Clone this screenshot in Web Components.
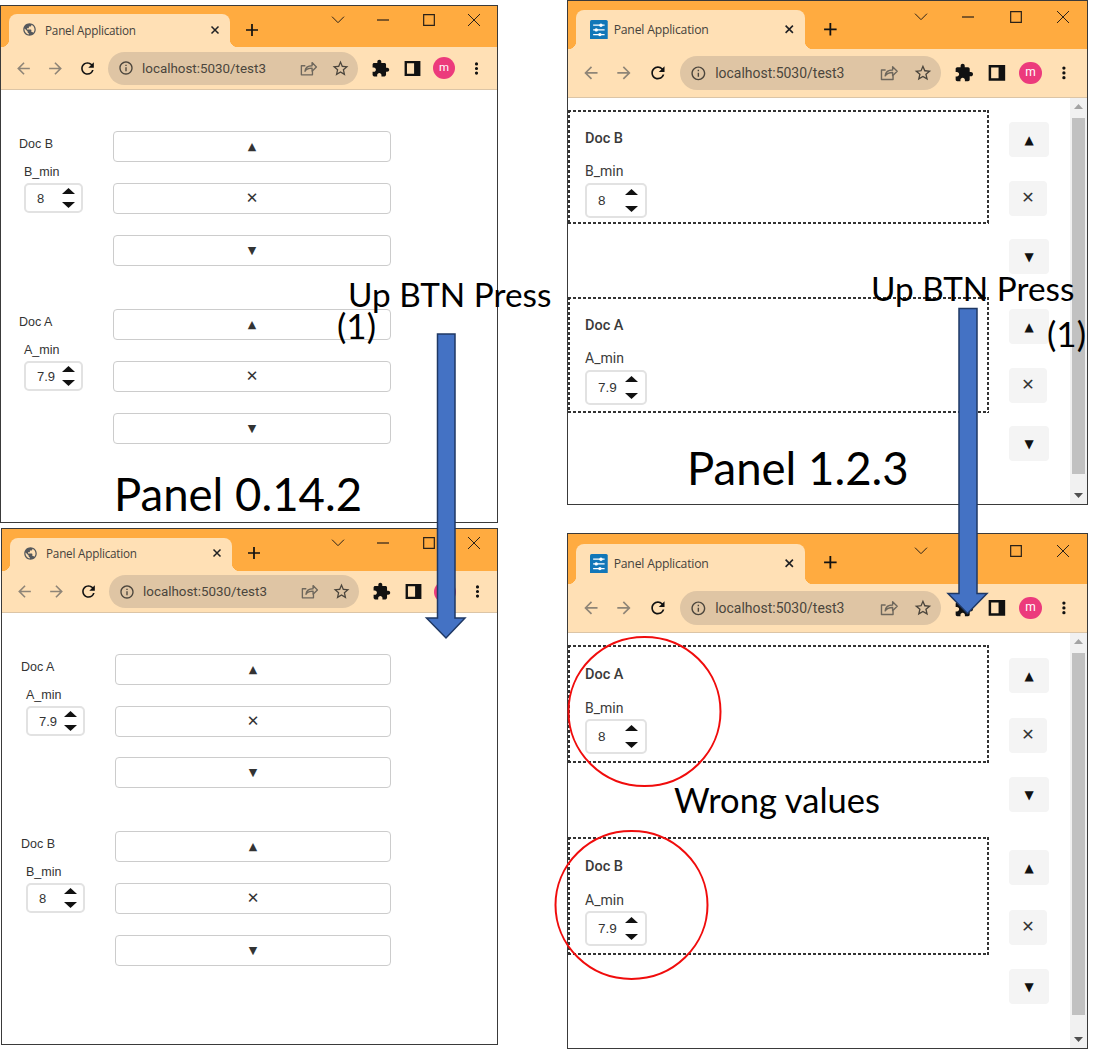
<!DOCTYPE html>
<html lang="en">
<head>
<meta charset="utf-8">
<title>Panel Application</title>
<style>
  html, body { margin: 0; background: #fff; }
  body { position: relative; width: 1113px; height: 1049px; overflow: hidden; font-family: "Liberation Sans", sans-serif; }
  browser-window.w1 { left: 0; top: 5px; width: 498px; height: 518px; --k: 1; --tabs-h: 41px; --tab-h: 33px; --bar-h: 43px; --ctl-top: 4px; --tab-w: 221px; --left: 18px; --btn-w: 278px; --btn-gap: 21px; --tab-pad: 2px; --plus-b: 9px; --plus-l: 14px; }
  browser-window.w2 { left: 567px; top: 0; width: 521px; height: 505px; --k: 1.044; --tabs-h: 48px; --tab-h: 39px; --bar-h: 49px; --ctl-top: 6px; --tab-w: 229px; --title-gap: 6px; --tab-pad: 0px; --plus-b: 11px; --plus-l: 17px; }
  browser-window.w3 { left: 1px; top: 528px; width: 497px; height: 517px; --k: 1; --tabs-h: 42px; --tab-h: 33px; --bar-h: 42px; --ctl-top: 4px; --tab-w: 222px; --left: 19px; --btn-w: 276px; --btn-gap: 20.700px; --tab-pad: 3px; --plus-b: 10px; --plus-l: 14px; }
  browser-window.w4 { left: 567px; top: 533px; width: 521px; height: 516px; --k: 1.044; --tabs-h: 50px; --tab-h: 40px; --bar-h: 49px; --ctl-top: 7px; --tab-w: 229px; --title-gap: 6px; --tab-pad: 1px; --plus-b: 13px; --plus-l: 17px; }
  new-page.p2 { --top: 12px; --row: 187px; --box1: 114px; --box2: 116px; --step: 58.5px; --btn-top: 12px; --label-gap: 16px; --spin-gap: 4px; --title-top: 21px; --thumb-gap: 13px; }
  new-page.p4 { --top: 12px; --row: 192px; --box1: 118px; --box2: 118px; --step: 59.7px; --btn-top: 13px; --label-gap: 17px; --spin-gap: 3px; --title-top: 22px; --thumb-gap: 16px; }
</style>
</head>
<body>

<browser-window class="w1" favicon="globe">
  <old-doc title="Doc B" label="B_min" value="8"></old-doc>
  <old-doc title="Doc A" label="A_min" value="7.9"></old-doc>
</browser-window>

<browser-window class="w2" favicon="panel">
  <new-page class="p2">
    <new-doc title="Doc B" label="B_min" value="8" box="--box1"></new-doc>
    <new-doc title="Doc A" label="A_min" value="7.9" box="--box2"></new-doc>
  </new-page>
</browser-window>

<browser-window class="w3" favicon="globe">
  <old-doc title="Doc A" label="A_min" value="7.9"></old-doc>
  <old-doc title="Doc B" label="B_min" value="8"></old-doc>
</browser-window>

<browser-window class="w4" favicon="panel">
  <new-page class="p4">
    <new-doc title="Doc A" label="B_min" value="8" box="--box1"></new-doc>
    <new-doc title="Doc B" label="A_min" value="7.9" box="--box2"></new-doc>
  </new-page>
</browser-window>

<slide-marks></slide-marks>

<script>
const ICONS = {
  back: 'M20 11H7.83l5.59-5.59L12 4l-8 8 8 8 1.41-1.41L7.83 13H20v-2z',
  forward: 'M4 11h12.17l-5.59-5.59L12 4l8 8-8 8-1.41-1.41L16.17 13H4v-2z',
  reload: 'M17.65 6.35A7.958 7.958 0 0 0 12 4c-4.42 0-7.99 3.58-7.99 8s3.57 8 7.99 8c3.73 0 6.84-2.55 7.73-6h-2.08A5.99 5.99 0 0 1 12 18c-3.31 0-6-2.69-6-6s2.69-6 6-6c1.66 0 3.14.69 4.22 1.78L13 11h7V4l-2.35 2.35z',
  info: 'M11 7h2v2h-2zm0 4h2v6h-2zm1-9C6.48 2 2 6.48 2 12s4.48 10 10 10 10-4.48 10-10S17.52 2 12 2zm0 18c-4.41 0-8-3.59-8-8s3.59-8 8-8 8 3.59 8 8-3.59 8-8 8z',
  star: 'M22 9.24l-7.19-.62L12 2 9.19 8.63 2 9.24l5.46 4.73L5.82 21 12 17.27 18.18 21l-1.63-7.03L22 9.24zM12 15.4l-3.76 2.27 1-4.28-3.32-2.88 4.38-.38L12 6.1l1.71 4.04 4.38.38-3.32 2.88 1 4.28L12 15.4z',
  puzzle: 'M20.5 11H19V7c0-1.1-.9-2-2-2h-4V3.5C13 2.12 11.88 1 10.5 1S8 2.12 8 3.5V5H4c-1.1 0-1.99.9-1.99 2v3.8H3.5c1.49 0 2.7 1.21 2.7 2.7s-1.21 2.7-2.7 2.7H2V20c0 1.1.9 2 2 2h3.8v-1.5c0-1.49 1.21-2.7 2.7-2.7 1.49 0 2.7 1.21 2.7 2.7V22H17c1.1 0 2-.9 2-2v-4h1.5c1.38 0 2.5-1.12 2.5-2.5S21.88 11 20.5 11z',
  globe: 'M12 2C6.48 2 2 6.48 2 12s4.48 10 10 10 10-4.48 10-10S17.52 2 12 2zm-1 17.93c-3.95-.49-7-3.85-7-7.93 0-.62.08-1.21.21-1.79L9 15v1c0 1.1.9 2 2 2v1.93zm6.9-2.54c-.26-.81-1-1.39-1.9-1.39h-1v-3c0-.55-.45-1-1-1H8v-2h2c.55 0 1-.45 1-1V7h2c1.1 0 2-.9 2-2v-.41c2.93 1.19 5 4.06 5 7.41 0 2.08-.8 3.97-2.1 5.39z',
  dots: 'M12 4.2a2 2 0 1 0 0 4 2 2 0 0 0 0-4zm0 5.8a2 2 0 1 0 0 4 2 2 0 0 0 0-4zm0 5.8a2 2 0 1 0 0 4 2 2 0 0 0 0-4z'
};

// stroked ones, these don't come out right as filled paths
const STROKES = {
  plus: '<path d="M12 3v18M3 12h18" stroke-width="2.6"/>',
  close: '<path d="M5 5l14 14M19 5L5 19" stroke-width="3"/>',
  chevron: '<path d="M3 7l9 9 9-9" stroke-width="1.500"/>',
  minimize: '<path d="M3 12h18" stroke-width="1.800"/>',
  maximize: '<path d="M4 4h16v16H4z" stroke-width="1.800"/>',
  winclose: '<path d="M3 3l18 18M21 3L3 21" stroke-width="1.500"/>',
  share: '<path d="M17 13.500V20H3V8.500h5M7.500 15.500c.5-4.500 4-7 9-7V4.500L22 10l-5.500 5.500v-4c-4 0-7 1-9 4z" stroke-width="1.700" stroke-linejoin="round"/>',
  sidebar: '<path d="M3.500 4h17v16h-17z" stroke-width="3"/><path d="M14 4h6.500v16H14z" fill="currentColor" stroke="none"/>'
};

class AppIcon extends HTMLElement {
  connectedCallback() {
    const name = this.getAttribute('name');
    const inner = ICONS[name]
      ? `<path d="${ICONS[name]}" fill="currentColor"/>`
      : `<g fill="none" stroke="currentColor">${STROKES[name]}</g>`;
    this.attachShadow({ mode: 'open' }).innerHTML = `
      <style>:host { display: block; width: 16px; height: 16px; flex: none; } svg { display: block; width: 100%; height: 100%; }</style>
      <svg viewBox="0 0 24 24" aria-hidden="true">${inner}</svg>`;
  }
}

class PanelFavicon extends HTMLElement {
  connectedCallback() {
    this.attachShadow({ mode: 'open' }).innerHTML = `
      <style>:host { display: block; flex: none; width: calc(17px * var(--k)); height: calc(19px * var(--k)); } svg { display: block; width: 100%; height: 100%; }</style>
      <svg viewBox="0 0 17 19" aria-hidden="true">
        <rect width="17" height="19" rx="1.500" fill="#1277b8"/>
        <path d="M3 5h11M3 9.500h11M3 14h11" stroke="#fff" stroke-width="1.200" fill="none"/>
        <circle cx="10.500" cy="5" r="1.600" fill="#fff"/><circle cx="6" cy="9.500" r="1.600" fill="#fff"/><circle cx="9.500" cy="14" r="1.600" fill="#fff"/>
      </svg>`;
  }
}

class BrowserWindow extends HTMLElement {
  connectedCallback() {
    const favicon = this.getAttribute('favicon') === 'panel'
      ? '<panel-favicon></panel-favicon>'
      : '<app-icon class="globe" name="globe"></app-icon>';
    this.attachShadow({ mode: 'open' }).innerHTML = `
      <style>
        :host { position: absolute; box-sizing: border-box; display: flex; flex-direction: column; border: 1px solid #3a3a3a; background: #fff; overflow: hidden; color: #202124; }
        .tabs { height: var(--tabs-h); flex: none; display: flex; align-items: flex-end; background: #ffab40; padding-left: calc(8px * var(--k)); }
        .tab { position: relative; box-sizing: border-box; width: var(--tab-w); height: var(--tab-h); background: #ffe0b5; border-radius: 8px 8px 0 0; display: flex; align-items: center; padding: 0 calc(9px * var(--k)) var(--tab-pad) calc(13px * var(--k)); font: calc(11.700px * var(--k)) "Open Sans", sans-serif; letter-spacing: -.2px; color: #45423c; }
        .tab::before, .tab::after { content: ""; position: absolute; bottom: 0; width: 8px; height: 8px; }
        .tab::before { left: -8px; background: radial-gradient(circle at 0 0, transparent 8px, #ffe0b5 8.500px); }
        .tab::after { right: -8px; background: radial-gradient(circle at 100% 0, transparent 8px, #ffe0b5 8.500px); }
        .tab .title { flex: 1; margin-left: var(--title-gap, 8px); white-space: nowrap; }
        .globe { width: calc(15px * var(--k)); height: calc(15px * var(--k)); color: #55585c; }
        .tab-x { width: calc(12px * var(--k)); height: calc(12px * var(--k)); color: #202124; }
        .plus { width: calc(16px * var(--k)); height: calc(16px * var(--k)); align-self: flex-end; margin: 0 0 var(--plus-b) var(--plus-l); color: #111; }
        .controls { margin-left: auto; align-self: flex-start; display: flex; padding-top: var(--ctl-top); }
        .controls span { width: calc(45.500px * var(--k)); height: 20px; display: flex; align-items: center; justify-content: center; color: #2a2118; }
        .bar { height: var(--bar-h); box-sizing: border-box; flex: none; display: flex; align-items: center; background: #ffe0b5; border-bottom: 1px solid #dcc5a6; padding-left: calc(6px * var(--k)); }
        .cell { width: calc(32px * var(--k)); display: flex; align-items: center; justify-content: center; flex: none; }
        .cell app-icon { width: calc(19px * var(--k)); height: calc(19px * var(--k)); }
        .dim { color: #8f8577; }
        .dark { color: #111; }
        .omni { box-sizing: border-box; width: calc(250px * var(--k)); height: calc(33px * var(--k)); margin: 0 calc(6px * var(--k)) 0 calc(5px * var(--k)); background: #dfc5a4; border-radius: 17px; display: flex; align-items: center; padding-left: calc(10px * var(--k)); font: calc(13.400px * var(--k)) Roboto, sans-serif; color: #4b453c; }
        .omni .url { flex: 1; margin-left: calc(8px * var(--k)); white-space: nowrap; }
        .omni .i { width: calc(16px * var(--k)); height: calc(16px * var(--k)); color: #4b453c; }
        .omni .share, .omni .star { width: calc(19px * var(--k)); height: calc(19px * var(--k)); color: #6e675c; margin-right: calc(13px * var(--k)); }
        .omni .star { margin-right: calc(8px * var(--k)); color: #4b453c; }
        .avatar { width: calc(22px * var(--k)); height: calc(22px * var(--k)); border-radius: 50%; background: #ec3a7c; color: #fff; font: calc(11.500px * var(--k))/calc(20px * var(--k)) Roboto, sans-serif; text-align: center; }
        .page { flex: 1; min-height: 0; display: flex; flex-direction: column; }
      </style>
      <div class="tabs">
        <div class="tab">${favicon}<span class="title">Panel Application</span><app-icon class="tab-x" name="close"></app-icon></div>
        <app-icon class="plus" name="plus"></app-icon>
        <div class="controls">
          <span><app-icon name="chevron"></app-icon></span>
          <span><app-icon name="minimize"></app-icon></span>
          <span><app-icon name="maximize"></app-icon></span>
          <span><app-icon name="winclose"></app-icon></span>
        </div>
      </div>
      <div class="bar">
        <div class="cell dim"><app-icon name="back"></app-icon></div>
        <div class="cell dim"><app-icon name="forward"></app-icon></div>
        <div class="cell dark"><app-icon name="reload"></app-icon></div>
        <div class="omni">
          <app-icon class="i" name="info"></app-icon>
          <span class="url">localhost:5030/test3</span>
          <app-icon class="share" name="share"></app-icon>
          <app-icon class="star" name="star"></app-icon>
        </div>
        <div class="cell dark"><app-icon name="puzzle"></app-icon></div>
        <div class="cell dark"><app-icon name="sidebar"></app-icon></div>
        <div class="cell"><div class="avatar">m</div></div>
        <div class="cell dark"><app-icon name="dots"></app-icon></div>
      </div>
      <div class="page"><slot></slot></div>`;
  }
}

class SpinBox extends HTMLElement {
  connectedCallback() {
    this.attachShadow({ mode: 'open' }).innerHTML = `
      <style>
        :host { box-sizing: border-box; display: flex; align-items: center; width: var(--spin-w, 59px); height: var(--spin-h, 30px); background: #fff; border: 2px solid #e2e2e2; border-radius: 5px; font: var(--spin-font, 13px) "Liberation Sans", sans-serif; color: #333; }
        .val { flex: 1; padding-left: 11px; }
        .arrows { flex: none; width: var(--arrows-w, 26px); height: 100%; display: flex; flex-direction: column; justify-content: center; gap: var(--arrows-gap, 8px); align-items: center; }
        svg { display: block; width: 13px; height: 6px; }
      </style>
      <span class="val">${this.getAttribute('value')}</span>
      <div class="arrows">
        <svg viewBox="0 0 13 6"><path d="M6.500 0L13 6H0z" fill="#111"/></svg>
        <svg viewBox="0 0 13 6"><path d="M0 0h13L6.500 6z" fill="#111"/></svg>
      </div>`;
  }
}

// Panel 0.14.2 row: text column on the left, wide bordered buttons on the right
class OldDoc extends HTMLElement {
  connectedCallback() {
    this.attachShadow({ mode: 'open' }).innerHTML = `
      <style>
        :host { display: grid; grid-template-columns: 94px var(--btn-w); margin: 0 0 43px var(--left); font: 12.500px "Liberation Sans", sans-serif; color: #333; }
        :host(:first-of-type) { margin-top: 41px; }
        .title { line-height: 16px; margin-top: 5px; }
        .label { line-height: 14px; margin: 13px 0 4px 5px; }
        spin-box { margin-left: 5px; }
        .btns { display: flex; flex-direction: column; gap: var(--btn-gap); }
        button { box-sizing: border-box; height: 31px; padding: 0; background: #fff; border: 1px solid #ccc; border-radius: 4px; font: 11px/1 "DejaVu Sans", sans-serif; color: #333; }
        button.x { font-size: 15px; }
      </style>
      <div>
        <div class="title">${this.getAttribute('title')}</div>
        <div class="label">${this.getAttribute('label')}</div>
        <spin-box value="${this.getAttribute('value')}"></spin-box>
      </div>
      <div class="btns"><button>▲</button><button class="x">✕</button><button>▼</button></div>`;
  }
}

// Panel 1.2.3 page: the rows plus a scrollbar down the right
class NewPage extends HTMLElement {
  connectedCallback() {
    this.attachShadow({ mode: 'open' }).innerHTML = `
      <style>
        :host { flex: 1; min-height: 0; height: 100%; display: flex; }
        .rows { flex: 1; padding-top: var(--top); }
        .bar { flex: none; width: 17px; background: #f1f1f1; display: flex; flex-direction: column; align-items: center; }
        .bar svg { flex: none; width: 9px; height: 5px; margin: 6px 0; }
        .bar svg.up { margin-bottom: 9px; }
        .thumb { flex: 1; width: 13px; background: #c1c1c1; }
        .gap { flex: none; height: var(--thumb-gap); }
      </style>
      <div class="rows"><slot></slot></div>
      <div class="bar">
        <svg class="up" viewBox="0 0 9 5"><path d="M4.500 0L9 5H0z" fill="#a3a3a3"/></svg>
        <div class="thumb"></div>
        <div class="gap"></div>
        <svg viewBox="0 0 9 5"><path d="M0 0h9L4.500 5z" fill="#505050"/></svg>
      </div>`;
  }
}

class NewDoc extends HTMLElement {
  connectedCallback() {
    const box = this.getAttribute('box');
    this.attachShadow({ mode: 'open' }).innerHTML = `
      <style>
        :host { display: flex; align-items: flex-start; height: var(--row); font: 14px Roboto, sans-serif; color: #3a3a3a; --spin-w: 62px; --spin-h: 35px; --arrows-w: 28px; --arrows-gap: 11px; --spin-font: 13.500px; --dash: #333 0 3px, transparent 3px 5px; }
        /* css dashed gives dashes too long, so the 3/2 dash is painted */
        .box { box-sizing: border-box; width: 421px; height: var(${box}); padding: var(--title-top) 0 0 17px;
          background:
            repeating-linear-gradient(90deg, var(--dash)) top / 100% 2px no-repeat,
            repeating-linear-gradient(90deg, var(--dash)) bottom / 100% 2px no-repeat,
            repeating-linear-gradient(180deg, var(--dash)) left / 2px 100% no-repeat,
            repeating-linear-gradient(180deg, var(--dash)) right / 2px 100% no-repeat; }
        .title { font-size: 14.500px; font-weight: 500; line-height: 16px; }
        .label { line-height: 16px; margin: var(--label-gap) 0 var(--spin-gap); }
        .btns { margin-left: 20px; padding-top: var(--btn-top); display: flex; flex-direction: column; }
        button { flex: none; width: 40px; height: 35px; margin-bottom: calc(var(--step) - 35px); padding: 0; background: #f4f4f4; border: 0; border-radius: 4px; font: 12px/1 "DejaVu Sans", sans-serif; color: #111; }
        button.x { width: 38px; font-size: 16px; color: #333; }
      </style>
      <div class="box">
        <div class="title">${this.getAttribute('title')}</div>
        <div class="label">${this.getAttribute('label')}</div>
        <spin-box value="${this.getAttribute('value')}"></spin-box>
      </div>
      <div class="btns"><button>▲</button><button class="x">✕</button><button>▼</button></div>`;
  }
}

// annotations drawn on top of the screenshots, free placed on the slide
class SlideMarks extends HTMLElement {
  connectedCallback() {
    this.attachShadow({ mode: 'open' }).innerHTML = `
      <style>
        :host { position: absolute; inset: 0; pointer-events: none; font-family: Lato, sans-serif; color: #000; }
        span { position: absolute; white-space: nowrap; line-height: 1; }
        .mid { font-size: 33.300px; }
        .one { font-size: 35px; }
        .big { font-size: 45.500px; }
        .wrong { font-size: 34.500px; }
        svg { position: absolute; left: 0; top: 0; }
      </style>
      <svg width="1113" height="1049" aria-hidden="true">
        <path d="M437.500 334h17.500v284h10l-19 20-19.500-20h11z" fill="#4472c4" stroke="#1f3864" stroke-width="1.500"/>
        <path d="M959 308.500h18v285h10l-19.500 20-19.500-20h11z" fill="#4472c4" stroke="#1f3864" stroke-width="1.500"/>
        <ellipse cx="644.500" cy="711.500" rx="76" ry="74.500" fill="none" stroke="#f00c0c" stroke-width="2"/>
        <ellipse cx="631.500" cy="905" rx="76" ry="74" fill="none" stroke="#f00c0c" stroke-width="2"/>
      </svg>
      <span class="mid" style="left:348px;top:278px">Up BTN Press</span>
      <span class="one" style="left:337px;top:308px">(1)</span>
      <span class="mid" style="left:871px;top:272px">Up BTN Press</span>
      <span class="one" style="left:1047px;top:316px">(1)</span>
      <span class="big" style="left:114px;top:471px">Panel 0.14.2</span>
      <span class="big" style="left:687px;top:445px">Panel 1.2.3</span>
      <span class="wrong" style="left:674px;top:783px">Wrong values</span>`;
  }
}

customElements.define('app-icon', AppIcon);
customElements.define('panel-favicon', PanelFavicon);
customElements.define('spin-box', SpinBox);
customElements.define('browser-window', BrowserWindow);
customElements.define('old-doc', OldDoc);
customElements.define('new-page', NewPage);
customElements.define('new-doc', NewDoc);
customElements.define('slide-marks', SlideMarks);
</script>
</body>
</html>
